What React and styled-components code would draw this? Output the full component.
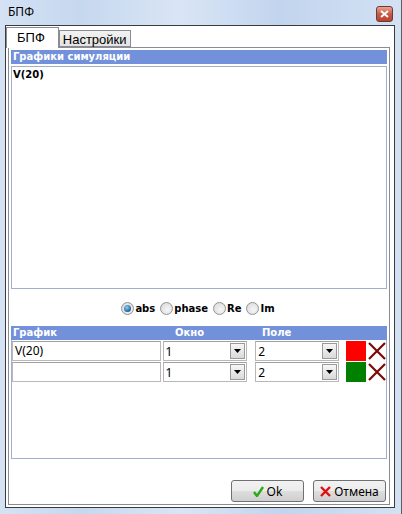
import styled, { createGlobalStyle } from "styled-components";

const GlobalStyle = createGlobalStyle`
  html, body {
    margin: 0;
    padding: 0;
    background: #c8d8ee;
  }
  * {
    box-sizing: border-box;
  }
`;

const rows = [
  { name: "V(20)", win: "1", field: "2", color: "#ff0000" },
  { name: "", win: "1", field: "2", color: "#008000" },
];

const modes = [
  { label: "abs", checked: true },
  { label: "phase" },
  { label: "Re" },
  { label: "Im" },
];

const Arrow = () => (
  <svg width="7" height="4" viewBox="0 0 7 4">
    <path d="M0 0 H7 L3.5 4 Z" fill="#000" />
  </svg>
);

const App = () => {
  return (
    <>
      <GlobalStyle />
      <Window>
        <TitleBar>
          <Title>БПФ</Title>
          <CloseButton>
            <svg width="9" height="8" viewBox="0 0 9 8">
              <path d="M1 1 L8 7 M8 1 L1 7" stroke="#fff" strokeWidth="2" />
            </svg>
          </CloseButton>
        </TitleBar>
        <Client>
          <Tabs>
            <Tab active>БПФ</Tab>
            <Tab>Настройки</Tab>
          </Tabs>
          <Sheet>
            <Header>Графики симуляции</Header>
            <ListBox>
              <ListItem>V(20)</ListItem>
            </ListBox>
            <RadioRow>
              {modes.map((m) => (
                <RadioItem key={m.label}>
                  <Radio checked={m.checked} />
                  {m.label}
                </RadioItem>
              ))}
            </RadioRow>
            <TableBox>
              <TableHead>
                <span>График</span>
                <span>Окно</span>
                <span>Поле</span>
              </TableHead>
              {rows.map((r, i) => (
                <Row key={i}>
                  <TextInput>{r.name}</TextInput>
                  <Select width={85} gap={2}>
                    <SelectValue>{r.win}</SelectValue>
                    <DropButton>
                      <Arrow />
                    </DropButton>
                  </Select>
                  <Select width={84} gap={8}>
                    <SelectValue>{r.field}</SelectValue>
                    <DropButton>
                      <Arrow />
                    </DropButton>
                  </Select>
                  <Swatch color={r.color} />
                  <Delete>
                    <svg width="18" height="18" viewBox="0 0 18 18">
                      <path
                        d="M1 1 L17 17 M17 1 L1 17"
                        stroke="#7a0a0a"
                        strokeWidth="2.2"
                      />
                    </svg>
                  </Delete>
                </Row>
              ))}
            </TableBox>
            <Buttons>
              <Button>
                <svg width="11" height="11" viewBox="0 0 11 11">
                  <path
                    d="M1 6 L4 10 L10 1"
                    stroke="#2ea81a"
                    strokeWidth="2.4"
                    fill="none"
                  />
                </svg>
                Ok
              </Button>
              <Button>
                <svg width="11" height="11" viewBox="0 0 11 11">
                  <path
                    d="M1 1 L10 10 M10 1 L1 10"
                    stroke="#e01010"
                    strokeWidth="2.4"
                  />
                </svg>
                Отмена
              </Button>
            </Buttons>
          </Sheet>
        </Client>
      </Window>
    </>
  );
};

export default App;

const Window = styled.div`
  width: 402px;
  height: 514px;
  display: flex;
  flex-direction: column;
  padding: 0 6px 6px 5px;
  background: linear-gradient(
      90deg,
      #d4e2f4 0%,
      #c6d8ef 20%,
      #d9e5f5 45%,
      #c2d5ee 70%,
      #d3e1f3 100%
    ),
    #c8d8ee;
  border-right: 1px solid #556070;
  font-family: "Noto Sans", "DejaVu Sans", sans-serif;
`;

const TitleBar = styled.div`
  height: 25px;
  display: flex;
  align-items: center;
  justify-content: space-between;
  padding: 0 2px 2px 3px;
`;

const Title = styled.span`
  font-size: 12px;
  color: #000;
`;

const CloseButton = styled.div`
  width: 17px;
  height: 16px;
  margin-top: 4px;
  border: 1px solid #6e3a32;
  border-radius: 3px;
  background: linear-gradient(#e8a493, #c85a45 50%, #b8432f);
  display: flex;
  align-items: center;
  justify-content: center;
`;

const Client = styled.div`
  flex: 1;
  display: flex;
  flex-direction: column;
  border: 1px solid #3c3c3c;
  background: #fff;
  padding: 0 4px 2px 2px;
`;

const Tabs = styled.div`
  height: 21px;
  display: flex;
  align-items: flex-end;
`;

const Tab = styled.div`
  height: ${(p) => (p.active ? "21px" : "17px")};
  margin-left: ${(p) => (p.active ? "-2px" : "0")};
  margin-bottom: ${(p) => (p.active ? "-1px" : "0")};
  padding: ${(p) => (p.active ? "1px 13px 0 10px" : "0 3px 0 3px")};
  border: 1px solid #898c95;
  border-bottom: ${(p) => (p.active ? "none" : "1px solid #898c95")};
  background: ${(p) =>
    p.active ? "#fff" : "linear-gradient(#f2f2f2, #e3e3e3)"};
  font-family: "Liberation Sans", Arial, sans-serif;
  font-size: 13px;
  line-height: 17px;
  color: #000;
  position: relative;
  z-index: ${(p) => (p.active ? 1 : 0)};
`;

const Sheet = styled.div`
  flex: 1;
  display: flex;
  flex-direction: column;
  border: 1px solid #898c95;
  padding: 2px;
`;

const Header = styled.div`
  height: 14px;
  background: #7391db;
  color: #fff;
  font-family: "DejaVu Sans", sans-serif;
  font-weight: bold;
  font-size: 10px;
  line-height: 14px;
  padding-left: 2px;
`;

const ListBox = styled.div`
  height: 223px;
  margin-top: 2px;
  border: 1px solid #9fb0cc;
  padding: 1px;
`;

const ListItem = styled.div`
  font-family: "DejaVu Sans", sans-serif;
  font-weight: bold;
  font-size: 10px;
  line-height: 14px;
  color: #000;
`;

const RadioRow = styled.div`
  height: 37px;
  display: flex;
  align-items: center;
  justify-content: center;
  gap: 5px;
  padding-top: 1px;
  padding-right: 2px;
`;

const RadioItem = styled.label`
  display: flex;
  align-items: center;
  gap: 1px;
  font-family: "DejaVu Sans", sans-serif;
  font-weight: bold;
  font-size: 10px;
  color: #000;
`;

const Radio = styled.span`
  width: 13px;
  height: 13px;
  border-radius: 50%;
  border: 1px solid #8f9397;
  background: radial-gradient(circle at 60% 60%, #f6f6f6, #d6d6d6);
  display: flex;
  align-items: center;
  justify-content: center;
  &::after {
    content: "";
    display: ${(p) => (p.checked ? "block" : "none")};
    width: 7px;
    height: 7px;
    border-radius: 50%;
    background: radial-gradient(circle at 40% 35%, #8fd0f8, #1f5f96 70%);
  }
`;

const TableBox = styled.div`
  height: 133px;
  border: 1px solid #9fb0cc;
  display: flex;
  flex-direction: column;
  gap: 1px;
`;

const TableHead = styled.div`
  height: 14px;
  margin: -1px -1px 0;
  background: #7391db;
  color: #fff;
  font-family: "DejaVu Sans", sans-serif;
  font-weight: bold;
  font-size: 10px;
  line-height: 14px;
  display: grid;
  grid-template-columns: 162px 87px 1fr;
  padding-left: 2px;
`;

const Row = styled.div`
  display: flex;
  align-items: center;
  height: 20px;
`;

const TextInput = styled.div`
  width: 149px;
  height: 20px;
  border: 1px solid #b8b8b8;
  border-top-color: #a0a0a0;
  background: #fff;
  font-size: 12px;
  line-height: 18px;
  padding-left: 2px;
  color: #000;
`;

const Select = styled.div`
  width: ${(p) => p.width}px;
  margin-left: ${(p) => p.gap}px;
  height: 20px;
  border: 1px solid #b8b8b8;
  border-top-color: #a0a0a0;
  background: #fff;
  display: flex;
  align-items: center;
  justify-content: space-between;
  padding-right: 1px;
`;

const SelectValue = styled.span`
  font-size: 12px;
  padding-left: 2px;
  color: #000;
`;

const DropButton = styled.span`
  width: 15px;
  height: 16px;
  border: 1px solid #9a9a9a;
  background: linear-gradient(#f7f7f7, #d9d9d9);
  display: flex;
  align-items: center;
  justify-content: center;
`;

const Swatch = styled.span`
  width: 20px;
  height: 20px;
  margin-left: 7px;
  background: ${(p) => p.color};
`;

const Delete = styled.span`
  width: 18px;
  height: 18px;
  margin-left: 2px;
  display: flex;
`;

const Buttons = styled.div`
  margin-top: 21px;
  display: flex;
  justify-content: flex-end;
  gap: 9px;
  padding-right: 1px;
`;

const Button = styled.button`
  width: 73px;
  height: 22px;
  border: 1px solid #707070;
  border-radius: 3px;
  background: linear-gradient(#f2f2f2 0%, #ebebeb 50%, #dddddd 51%, #cfcfcf 100%);
  display: flex;
  align-items: center;
  justify-content: center;
  gap: 3px;
  font-family: "Noto Sans", sans-serif;
  font-size: 12px;
  color: #000;
  padding: 0;
`;
